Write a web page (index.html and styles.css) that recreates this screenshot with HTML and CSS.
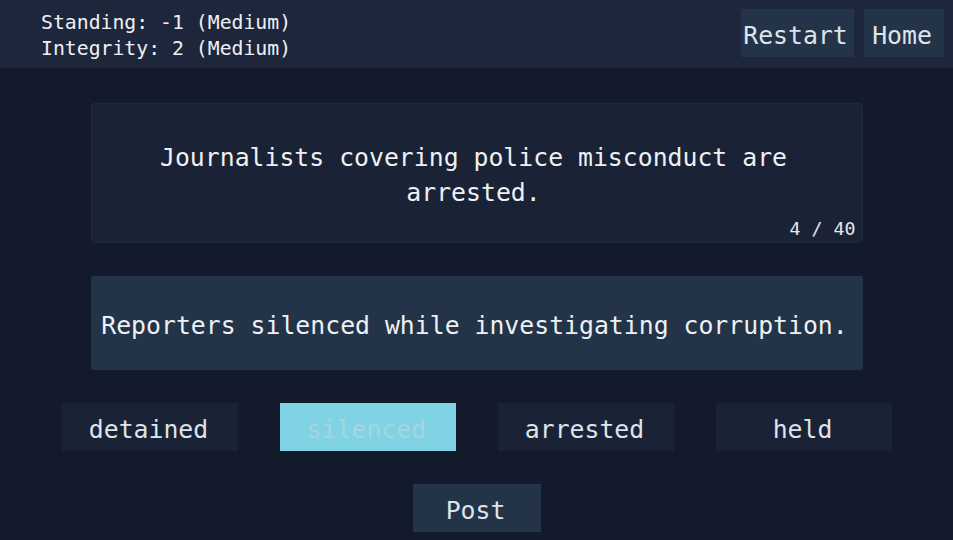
FILE: index.html
```html
<!DOCTYPE html>
<html>
<head>
<meta charset="utf-8">
<link rel="stylesheet" href="styles.css">
</head>
<body>
<header class="topbar">
  <div class="stats">
    <div class="stat">Standing: -1 (Medium)</div>
    <div class="stat">Integrity: 2 (Medium)</div>
  </div>
  <nav class="nav">
    <button class="nav-btn">Restart</button>
    <button class="nav-btn">Home</button>
  </nav>
</header>
<main class="game">
  <section class="prompt-card">
    <p class="prompt-text">Journalists covering police misconduct are arrested.</p>
    <div class="counter">4 / 40</div>
  </section>
  <section class="headline-card">
    <p class="headline-text">Reporters silenced while investigating corruption.</p>
  </section>
  <div class="options">
    <button class="option">detained</button>
    <button class="option option-selected">silenced</button>
    <button class="option">arrested</button>
    <button class="option">held</button>
  </div>
  <button class="post-btn">Post</button>
</main>
</body>
</html>
```

FILE: styles.css
```css
* { box-sizing: border-box; }
html, body { margin: 0; padding: 0; }
body {
  width: 953px;
  height: 540px;
  overflow: hidden;
  background: #131a2c;
  color: #e6e9ef;
  font-family: "DejaVu Sans Mono", "Liberation Mono", monospace;
}
button {
  font-family: inherit;
  border: none;
  cursor: pointer;
  padding: 0;
}
.topbar {
  height: 68px;
  background: #1e263c;
  display: flex;
  align-items: center;
  justify-content: space-between;
  padding: 0 9px 0 41px;
}
.stats {
  display: flex;
  flex-direction: column;
  font-size: 19.8px;
  line-height: 26px;
  padding-top: 3px;
  color: #eef0f4;
}
.nav {
  display: flex;
  gap: 10px;
  margin-top: -3px;
}
.nav-btn {
  height: 48px;
  background: #233449;
  color: #dfe3ea;
  font-size: 24.8px;
  padding: 5px 4px 0 0;
}
.nav-btn:first-child { width: 113px; }
.nav-btn:last-child { width: 80px; }
.game {
  display: flex;
  flex-direction: column;
  align-items: center;
}
.prompt-card {
  margin-top: 35px;
  width: 772px;
  height: 140px;
  background: #1a2236;
  border: 1px solid #1e2740;
  border-radius: 3px;
  display: flex;
  flex-direction: column;
  padding: 35.5px 6px 0 0;
}
.prompt-text {
  margin: 0 auto;
  width: 660px;
  text-align: center;
  font-size: 24.8px;
  line-height: 35px;
  color: #eef0f4;
}
.counter {
  margin-top: 10.5px;
  align-self: flex-end;
  font-size: 18.3px;
  line-height: 18px;
  color: #e3e6ec;
}
.headline-card {
  margin-top: 33px;
  width: 772px;
  height: 94px;
  background: #233449;
  border-radius: 3px;
  display: flex;
  align-items: center;
  justify-content: center;
}
.headline-text {
  margin: 0 0 0 -4px;
  font-size: 24.8px;
  line-height: 35px;
  color: #eef0f4;
  padding-top: 4px;
}
.options {
  margin-top: 33px;
  display: flex;
  gap: 42px;
}
.option {
  width: 176px;
  height: 48px;
  background: #1a2236;
  color: #dfe3ea;
  font-size: 24.8px;
  padding: 4px 2px 0 0;
}
.option-selected {
  background: #80d3e4;
  color: #a5d5e0;
}
.post-btn {
  margin-top: 33px;
  width: 128px;
  height: 48px;
  background: #233449;
  color: #dfe3ea;
  font-size: 24.8px;
  padding: 4px 2px 0 0;
}
```
